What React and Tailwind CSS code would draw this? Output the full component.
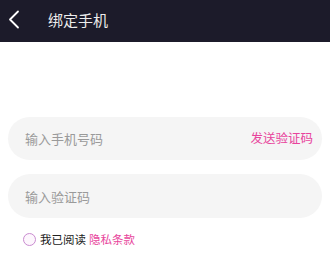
export default function App() {
  const font = { fontFamily: '"Noto Sans CJK SC", "Noto Sans", sans-serif' };
  return (
    <div className="w-[330px] h-[278px] bg-white overflow-hidden flex flex-col" style={font}>
      <div className="h-[42px] bg-[#1c1b2a] flex items-center pb-[3px] shrink-0">
        <svg width="12" height="19" viewBox="0 0 12 19" className="ml-[8px]">
          <path d="M10 1.5 L2 9.5 L10 17.5" fill="none" stroke="#ffffff" strokeWidth="1.8" strokeLinecap="round" strokeLinejoin="round" />
        </svg>
        <span className="ml-[28px] text-[15px] text-[#ececec] leading-none">绑定手机</span>
      </div>
      <div className="px-[8px] pt-[75px] flex flex-col">
        <div className="h-[43px] rounded-full bg-[#f5f5f5] flex items-center justify-between pl-[17px] pr-[9px]">
          <span className="text-[13px] text-[#9a9a9a] leading-none">输入手机号码</span>
          <span className="text-[12.5px] text-[#e8449c] leading-none">发送验证码</span>
        </div>
        <div className="mt-[14px] h-[44px] rounded-full bg-[#f5f5f5] flex items-center pl-[17px]">
          <span className="text-[13px] text-[#9a9a9a] leading-none">输入验证码</span>
        </div>
        <div className="mt-[15px] flex items-center pl-[15px]">
          <div className="w-[13px] h-[13px] rounded-full border border-[#c98bd0] bg-[#fdf6fd]" />
          <span className="ml-[4px] text-[11.5px] text-[#222] leading-none">我已阅读</span>
          <span className="ml-[3px] text-[11.5px] text-[#e8449c] leading-none">隐私条款</span>
        </div>
        <div className="mt-[32px] mx-[15px] h-[40px] rounded-full bg-[#f8f8f8] flex justify-center">
          <div className="w-[24px] h-[3px] bg-[#efefef] ml-[48px]" />
        </div>
      </div>
    </div>
  );
}
